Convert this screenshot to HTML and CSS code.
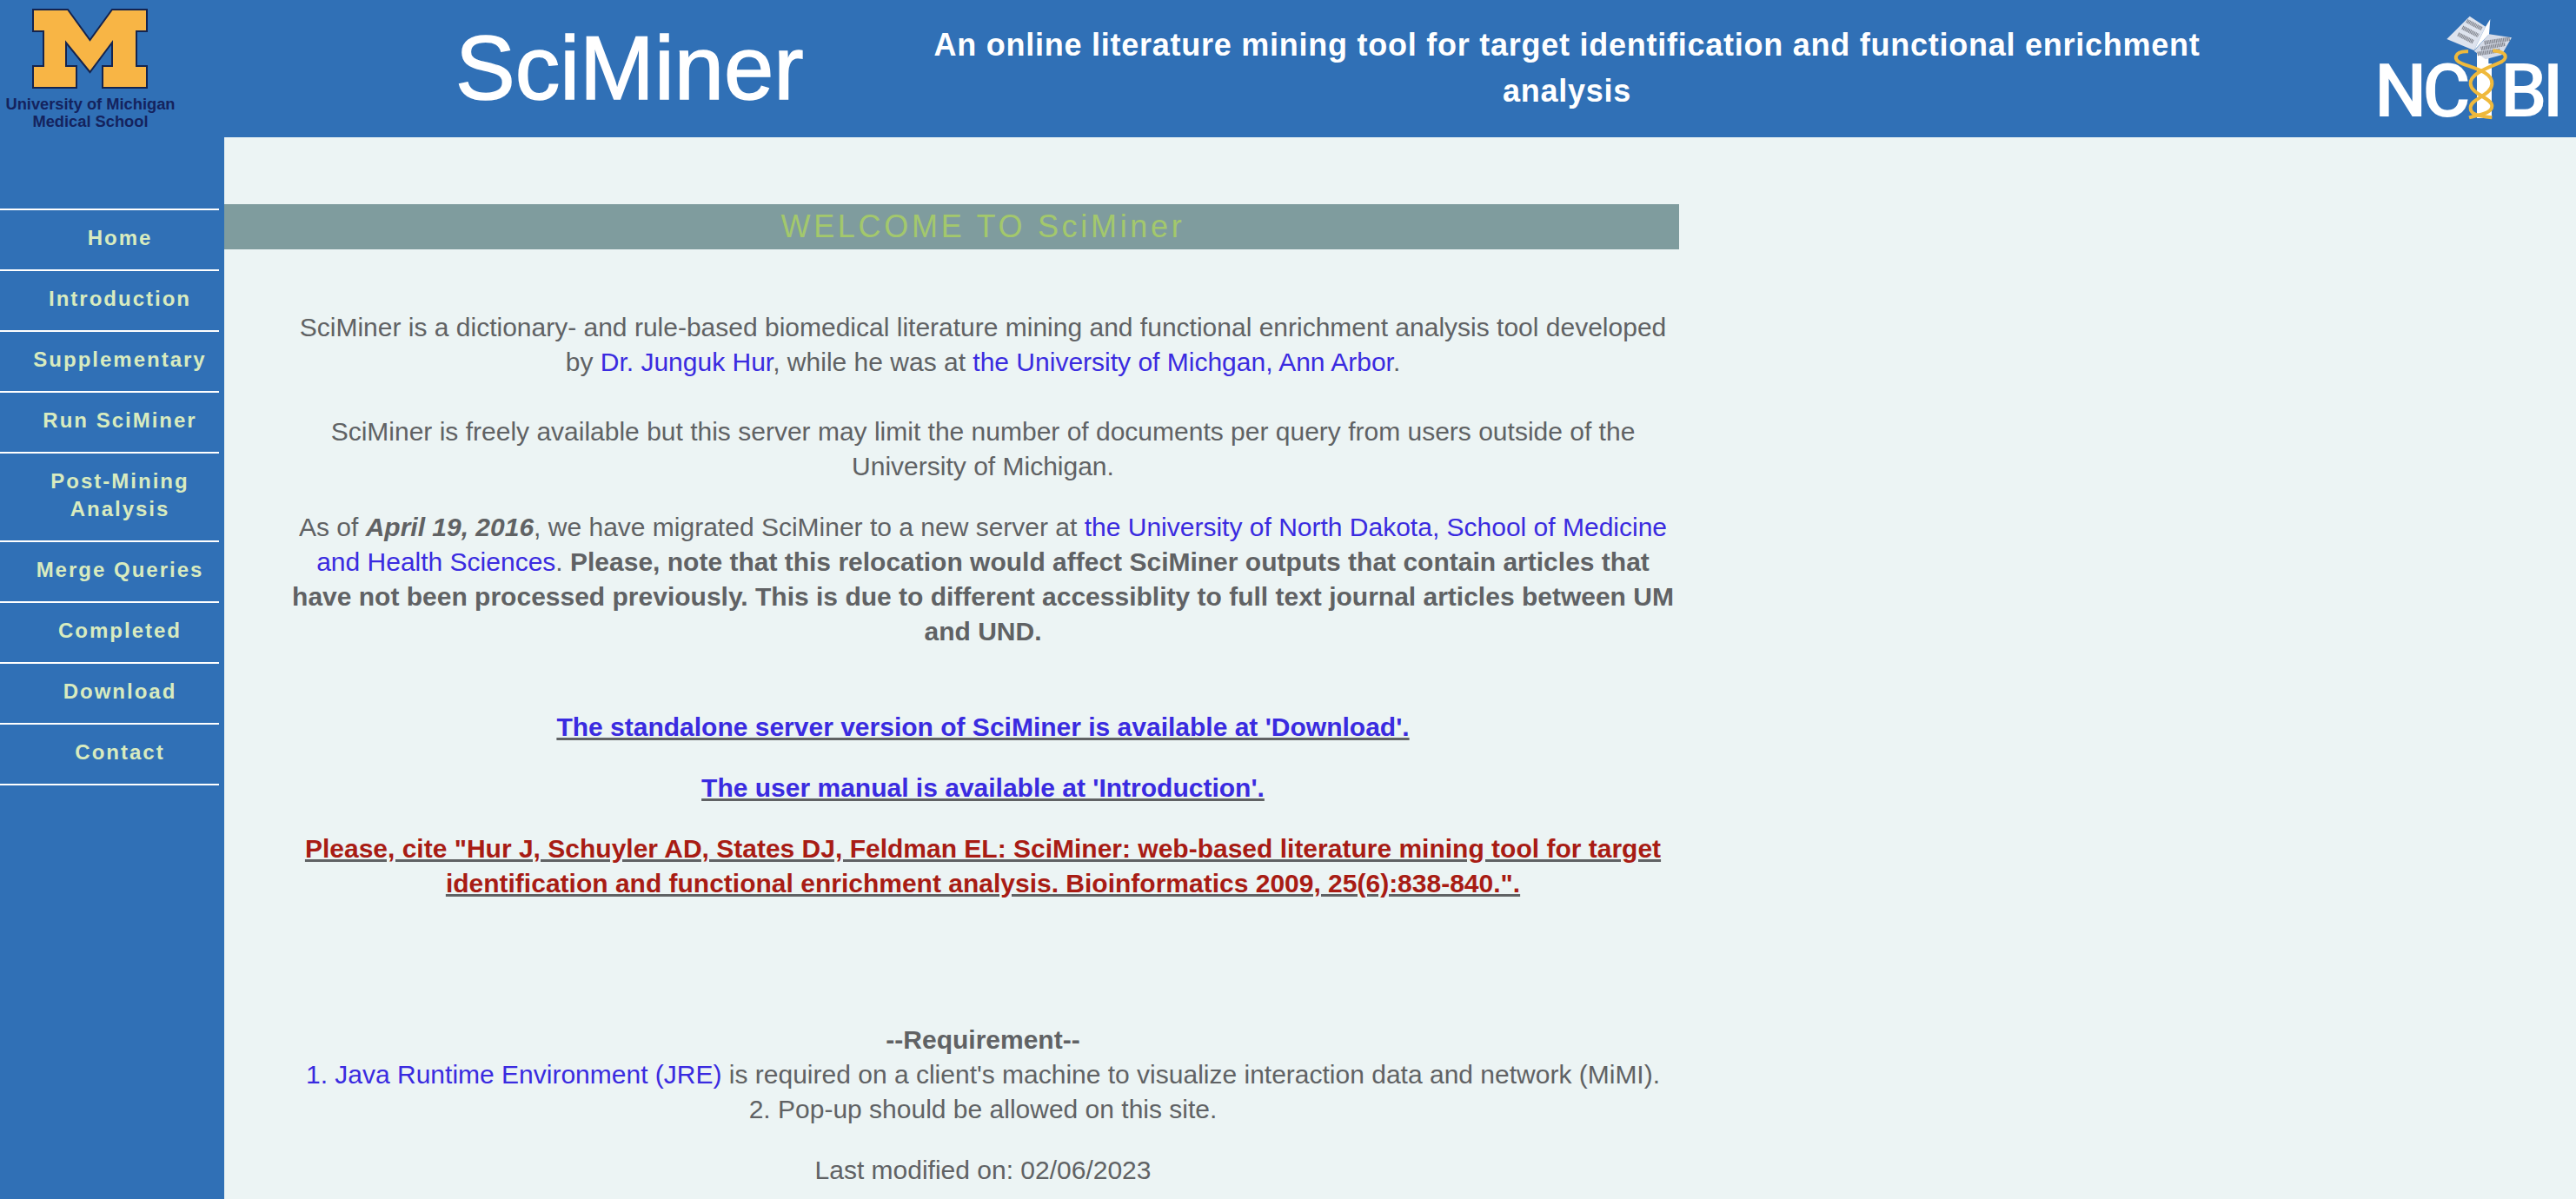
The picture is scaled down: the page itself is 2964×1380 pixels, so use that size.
FILE: index.html
```html
<!DOCTYPE html>
<html lang="en">
<head>
    <meta charset="UTF-8">
    <title>SciMiner</title>
    <link rel="stylesheet" href="styles.css">
</head>
<body>
    <header class="banner">
        <div class="um-logo">
            <svg class="um-mark" width="134" height="92" viewBox="0 0 134 92">
                <path d="M1 1H41L66.5 36L92 1H132V26H120V66H132V91H81V66H92V39L66.5 73L39 39V66H51V91H1V66H13V26H1Z" fill="#f8b545" stroke="#14244f" stroke-width="2"/>
            </svg>
            <div class="um-text">University of Michigan<br>Medical School</div>
        </div>
        <div class="site-name">SciMiner</div>
        <div class="tagline">An online literature mining tool for target identification and functional enrichment analysis</div>
        <div class="ncibi-logo">
            <span class="ncibi-text">NC<span class="ncibi-rod">I</span>BI</span>
            <svg class="ncibi-art" width="304" height="158" viewBox="0 0 912 474">
                <rect x="570" y="175" width="40" height="233" fill="#fff"/>
                <path d="M466 135L545 56L600 92L560 174Z" fill="#dde3ee"/>
                <path d="M560 174L600 92L616 66L612 118Z" fill="#fff"/>
                <path d="M560 176L612 118L690 130L655 190L600 205Z" fill="#d5dbe7"/>
                <path d="M505 118L558 145M520 95L575 123M535 72L588 100M596 148L684 134M584 168L668 152M572 186L650 174" fill="none" stroke="#7c7f88" stroke-width="14" stroke-dasharray="3 2"/>
                <path d="M540 178C490 175 485 210 520 220C560 235 625 250 622 290C620 330 550 340 548 370C546 395 570 400 622 406" fill="none" stroke="#efb93c" stroke-width="12"/>
                <path d="M625 175C680 180 680 205 640 220C590 240 545 260 548 290C550 325 622 340 622 365C622 392 580 395 543 406" fill="none" stroke="#efb93c" stroke-width="12"/>
            </svg>
        </div>
    </header>

    <div class="page">
        <nav class="sidebar">
            <ul>
                <li><a href="#">Home</a></li>
                <li><a href="#">Introduction</a></li>
                <li><a href="#">Supplementary</a></li>
                <li><a href="#">Run SciMiner</a></li>
                <li><a href="#">Post-Mining Analysis</a></li>
                <li><a href="#">Merge Queries</a></li>
                <li><a href="#">Completed</a></li>
                <li><a href="#">Download</a></li>
                <li><a href="#">Contact</a></li>
            </ul>
        </nav>

        <main class="content">
            <h1 class="welcome">WELCOME TO SciMiner</h1>
            <div class="text">
                <p class="first">SciMiner is a dictionary- and rule-based biomedical literature mining and functional enrichment analysis tool developed by <a href="#">Dr. Junguk Hur</a>, while he was at <a href="#">the University of Michgan, Ann Arbor</a>.</p>
                <p class="second">SciMiner is freely available but this server may limit the number of documents per query from users outside of the University of Michigan.</p>
                <p>As of <b><i>April 19, 2016</i></b>, we have migrated SciMiner to a new server at <a href="#">the University of North Dakota, School of Medicine and Health Sciences</a>. <b>Please, note that this relocation would affect SciMiner outputs that contain articles that have not been processed previously. This is due to different accessiblity to full text journal articles between UM and UND.</b></p>
                <p class="standalone"><a class="strong-link" href="#">The standalone server version of SciMiner is available at 'Download'.</a></p>
                <p><a class="strong-link" href="#">The user manual is available at 'Introduction'.</a></p>
                <p><a class="strong-link cite" href="#">Please, cite "Hur J, Schuyler AD, States DJ, Feldman EL: SciMiner: web-based literature mining tool for target identification and functional enrichment analysis. Bioinformatics 2009, 25(6):838-840.".</a></p>
                <p class="requirement"><b>--Requirement--</b><br><a href="#">1. Java Runtime Environment (JRE)</a> is required on a client's machine to visualize interaction data and network (MiMI).<br>2. Pop-up should be allowed on this site.</p>
                <p>Last modified on: 02/06/2023</p>
            </div>
        </main>
    </div>
</body>
</html>
```

FILE: styles.css
```css
* {
    box-sizing: border-box;
}

html, body {
    margin: 0;
    height: 100%;
    overflow: hidden;
}

body {
    background-color: #ecf4f4;
    color: #606264;
    font-family: "Liberation Sans", Arial, sans-serif;
    font-size: 30px;
    line-height: 40px;
}

a {
    color: #3a2be0;
    text-decoration: none;
}

.banner {
    display: flex;
    align-items: flex-start;
    height: 158px;
    background-color: #3070b6;
    color: #fff;
}

.um-logo {
    flex: none;
    width: 208px;
    padding-top: 10px;
    text-align: center;
}

.um-mark {
    display: block;
    margin-left: 37px;
}

.um-text {
    margin-top: 8px;
    color: #14235e;
    font-size: 18.3px;
    font-weight: bold;
    line-height: 20px;
    white-space: nowrap;
}

.site-name {
    flex: none;
    width: 432px;
    margin-left: 316px;
    padding-top: 24px;
    font-size: 103px;
    line-height: 110px;
    -webkit-text-stroke: 1.5px #fff;
}

.tagline {
    flex: none;
    width: 1500px;
    margin-left: 97px;
    padding-top: 25px;
    font-size: 36px;
    font-weight: bold;
    letter-spacing: 0.75px;
    line-height: 53px;
    text-align: center;
}

.ncibi-logo {
    position: relative;
    flex: none;
    width: 304px;
    height: 158px;
    margin-left: auto;
    padding: 55px 0 0 72px;
}

.ncibi-art {
    position: absolute;
    left: 0;
    top: 0;
}

.ncibi-text {
    font-family: Roboto, sans-serif;
    font-size: 85px;
    font-weight: 500;
    letter-spacing: -5px;
    line-height: 100px;
    white-space: nowrap;
}

.ncibi-rod {
    margin: 0 8px 0 12px;
}

.page {
    display: flex;
    height: calc(100vh - 158px);
}

.sidebar {
    flex: none;
    width: 258px;
    padding-top: 82px;
    background-color: #3070b6;
}

.sidebar ul {
    width: 252px;
    margin: 0;
    padding: 0;
    list-style: none;
    border-top: 2px solid #fff;
}

.sidebar li {
    border-bottom: 2px solid #fff;
}

.sidebar a {
    display: block;
    padding: 16px 0 20px 24px;
    color: #d8ebbf;
    font-size: 24px;
    font-weight: bold;
    letter-spacing: 2px;
    line-height: 32px;
    text-align: center;
}

.content {
    flex: none;
    width: 1674px;
    padding-top: 77px;
}

.welcome {
    height: 52px;
    margin: 0;
    padding-left: 72px;
    background-color: #7f9c9e;
    color: #a3c86c;
    font-size: 36px;
    font-weight: normal;
    letter-spacing: 3.7px;
    line-height: 52px;
    text-align: center;
}

.text {
    padding-left: 72px;
    text-align: center;
}

.text p {
    margin: 30px 0;
}

.text p.first {
    margin-top: 70px;
}

.text p.second {
    margin-top: 40px;
}

.text p.standalone {
    margin-top: 70px;
}

.text p.requirement {
    margin-top: 140px;
}

.strong-link {
    font-weight: bold;
    text-decoration: underline;
    text-decoration-color: #606264;
}

.cite {
    color: #a81c14;
}
```
